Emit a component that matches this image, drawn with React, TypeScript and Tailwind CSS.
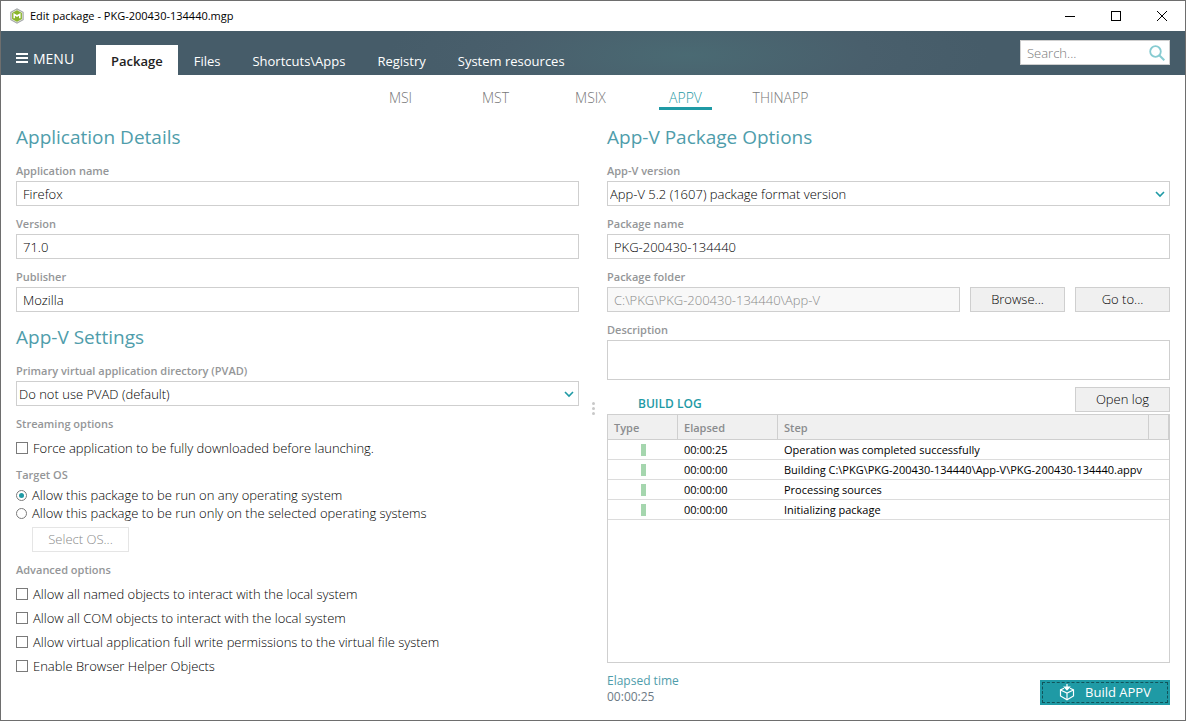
import { useState, type ReactNode } from 'react';

const mainTabs = ['Package', 'Files', 'Shortcuts\\Apps', 'Registry', 'System resources'];

const formats = ['MSI', 'MST', 'MSIX', 'APPV', 'THINAPP'];

const logRows = [
  { elapsed: '00:00:25', step: 'Operation was completed successfully' },
  { elapsed: '00:00:00', step: 'Building C:\\PKG\\PKG-200430-134440\\App-V\\PKG-200430-134440.appv' },
  { elapsed: '00:00:00', step: 'Processing sources' },
  { elapsed: '00:00:00', step: 'Initializing package' },
];

const advancedOptions = [
  'Allow all named objects to interact with the local system',
  'Allow all COM objects to interact with the local system',
  'Allow virtual application full write permissions to the virtual file system',
  'Enable Browser Helper Objects',
];

const inputClass =
  'block h-[25px] w-full min-w-0 border border-[#cfcfcf] bg-white px-1.5 text-[13px] font-light text-black outline-none disabled:bg-[#f8f8f8] disabled:text-[#8a8a8a]';
const buttonClass =
  'h-[25px] w-[95px] shrink-0 border border-[#cfcfcf] bg-[#f0f0f0] pt-px text-[13px] font-light text-black hover:bg-[#e6e6e6]';
const labelClass = 'block h-4 text-[11px] leading-4 font-semibold text-[#949698]';

function AppIcon() {
  return (
    <svg width="16" height="16" viewBox="0 0 16 16" aria-hidden="true">
      <path d="M8 .3 14.7 4v8L8 15.7 1.3 12V4z" fill="#a3a6a8" />
      <path d="M8 1.5 13.6 4.6v6.8L8 14.5l-5.6-3.1V4.6z" fill="#e6eadc" />
      <path d="M8 2.3 12.9 5v6L8 13.7 3.1 11V5z" fill="#8ab52b" />
      <path d="M5.2 10.300V6.300L8 8l2.800-1.700v4" fill="none" stroke="#fff" strokeWidth="1.500" />
    </svg>
  );
}

function BoxIcon() {
  return (
    <svg width="16" height="17" viewBox="0 0 16 17" fill="none" stroke="#fff" strokeWidth="1.2" aria-hidden="true">
      <path d="M5 4.300 1.500 6v6L8 15.700 14.500 12V6L11 4.300" />
      <path d="M1.500 6 8 9l6.500-3M8 9v6.500" />
      <path d="M8 0v5M5.500 3 8 5.800 10.500 3z" fill="#fff" />
    </svg>
  );
}

function Heading({ children }: { children: ReactNode }) {
  return <h2 className="h-7 text-[19px] leading-7 text-[#4f9dab]">{children}</h2>;
}

function Field({ id, label, children }: { id: string; label: string; children: ReactNode }) {
  return (
    <div className="flex flex-col gap-0.5">
      <label htmlFor={id} className={labelClass}>
        {label}
      </label>
      {children}
    </div>
  );
}

function Select({ id, value }: { id: string; value: string }) {
  return (
    <div className="relative">
      <select
        id={id}
        className="block h-[25px] w-full appearance-none border border-[#cfcfcf] bg-white pt-0.5 pr-6 pl-0.5 text-[13px] font-light text-black outline-none"
      >
        <option>{value}</option>
      </select>
      <svg
        className="pointer-events-none absolute top-[9px] right-[5px]"
        width="10"
        height="8"
        viewBox="0 0 10 8"
        fill="none"
        stroke="#1f9aa5"
        strokeWidth="1.6"
        aria-hidden="true"
      >
        <path d="m1 2 4 4 4-4" />
      </svg>
    </div>
  );
}

function Check({ label }: { label: string }) {
  return (
    <label className="flex h-6 items-center gap-[5px] text-[13px] font-light text-black">
      <input type="checkbox" className="h-3 w-3 shrink-0 appearance-none border border-[#7a7a7a] bg-white checked:bg-[#1f9aa5]" />
      <span className="pt-0.5">{label}</span>
    </label>
  );
}

function Radio({ label, checked, onChange }: { label: string; checked: boolean; onChange: () => void }) {
  return (
    <label className="flex h-[18px] items-center gap-[5px] text-[13px] font-light text-black">
      <input
        type="radio"
        name="target-os"
        checked={checked}
        onChange={onChange}
        className="h-[11px] w-[11px] shrink-0 appearance-none rounded-full border border-[#7a7a7a] bg-white bg-clip-content p-0.5 checked:bg-[#1f9aa5]"
      />
      <span className="pt-0.5">{label}</span>
    </label>
  );
}

function TitleBar() {
  return (
    <div className="flex h-[30px] shrink-0 items-center bg-white pl-2 text-[11px] text-black">
      <AppIcon />
      <span className="ml-[5px]">Edit package - PKG-200430-134440.mgp</span>
      <div className="ml-auto flex">
        <button type="button" aria-label="Minimize" className="flex h-[29px] w-[46px] items-center justify-center">
          <svg width="10" height="10" viewBox="0 0 10 10" stroke="#000" shapeRendering="crispEdges">
            <path d="M0 5.5h10" />
          </svg>
        </button>
        <button type="button" aria-label="Maximize" className="flex h-[29px] w-[46px] items-center justify-center">
          <svg width="10" height="10" viewBox="0 0 10 10" stroke="#000" fill="none" shapeRendering="crispEdges">
            <rect x=".5" y=".5" width="9" height="9" />
          </svg>
        </button>
        <button type="button" aria-label="Close" className="flex h-[29px] w-[46px] items-center justify-center">
          <svg width="10" height="10" viewBox="0 0 10 10" stroke="#000">
            <path d="m0 0 10 10M10 0 0 10" />
          </svg>
        </button>
      </div>
    </div>
  );
}

function Header() {
  const [tab, setTab] = useState('Package');

  return (
    <header className="flex h-11 shrink-0 bg-[#465c69] bg-[radial-gradient(ellipse_300px_70px_at_58%_55%,#4a6a73,#495f6c_60%,#465c69)] text-white">
      <button type="button" className="flex w-[95px] items-center gap-[5px] pt-2.5 pl-[15px] text-[14px]">
        <svg width="12" height="10" viewBox="0 0 12 10" fill="#fff" aria-hidden="true">
          <path d="M0 0h12v2H0zM0 4h12v2H0zM0 8h12v2H0z" />
        </svg>
        MENU
      </button>
      <nav className="flex items-end">
        {mainTabs.map((t) => (
          <button
            key={t}
            type="button"
            onClick={() => setTab(t)}
            className={`h-[30px] pt-1 text-[13px] ${
              t === tab ? 'bg-white px-[15px] font-semibold text-[#222]' : 'px-4 text-white'
            }`}
          >
            {t}
          </button>
        ))}
      </nav>
      <div className="mt-[9px] mr-[15px] ml-auto flex h-[25px] w-[150px] items-center border border-[#cfcfcf] bg-white">
        <input
          type="search"
          aria-label="Search"
          placeholder="Search..."
          className="w-full min-w-0 pt-0.5 pl-1.5 text-[13px] font-light text-black outline-none placeholder:text-[#777]"
        />
        <svg className="mr-1 shrink-0" width="16" height="16" viewBox="0 0 16 16" fill="none" stroke="#86cbd1" aria-hidden="true">
          <circle cx="6.5" cy="6.5" r="5.3" strokeWidth="1.8" />
          <path d="m10.3 10.3 5 5" strokeWidth="2" />
        </svg>
      </div>
    </header>
  );
}

function FormatTabs() {
  const [format, setFormat] = useState('APPV');

  return (
    <nav className="flex h-[35px] shrink-0 items-end pl-[352px]">
      {formats.map((f) => (
        <button key={f} type="button" onClick={() => setFormat(f)} className="flex w-[95px] justify-center text-[14px] font-light">
          <span
            className={`flex h-[25px] items-center border-b-[3px] px-2.5 pt-0.5 ${
              f === format ? 'border-[#1f9aa5] text-[#1f9aa5]' : 'border-transparent text-[#777]'
            }`}
          >
            {f}
          </span>
        </button>
      ))}
    </nav>
  );
}

function Details() {
  const [os, setOs] = useState<'any' | 'selected'>('any');

  return (
    <section className="flex min-w-0 flex-1 flex-col">
      <Heading>Application Details</Heading>
      <div className="mt-3 flex flex-col gap-2.5">
        <Field id="app-name" label="Application name">
          <input id="app-name" className={inputClass} defaultValue="Firefox" />
        </Field>
        <Field id="app-version" label="Version">
          <input id="app-version" className={inputClass} defaultValue="71.0" />
        </Field>
        <Field id="publisher" label="Publisher">
          <input id="publisher" className={inputClass} defaultValue="Mozilla" />
        </Field>
      </div>

      <div className="mt-[11px]">
        <Heading>App-V Settings</Heading>
      </div>
      <div className="mt-3">
        <Field id="pvad" label="Primary virtual application directory (PVAD)">
          <Select id="pvad" value="Do not use PVAD (default)" />
        </Field>
      </div>
      <fieldset className="mt-2.5">
        <legend className={labelClass}>Streaming options</legend>
        <div className="mt-1">
          <Check label="Force application to be fully downloaded before launching." />
        </div>
      </fieldset>
      <fieldset className="mt-[7px]">
        <legend className={labelClass}>Target OS</legend>
        <div className="mt-[3px]">
          <Radio
            label="Allow this package to be run on any operating system"
            checked={os === 'any'}
            onChange={() => setOs('any')}
          />
          <Radio
            label="Allow this package to be run only on the selected operating systems"
            checked={os === 'selected'}
            onChange={() => setOs('selected')}
          />
        </div>
        <button
          type="button"
          disabled={os === 'any'}
          className="mt-[5px] ml-4 h-[25px] w-[97px] border border-[#cfcfcf] bg-white pt-px text-[13px] font-light text-black disabled:border-[#e5e5e5] disabled:text-[#8a8a8a]"
        >
          Select OS...
        </button>
      </fieldset>
      <fieldset className="mt-2.5">
        <legend className={labelClass}>Advanced options</legend>
        <div className="mt-1">
          {advancedOptions.map((o) => (
            <Check key={o} label={o} />
          ))}
        </div>
      </fieldset>
    </section>
  );
}

function BuildLog() {
  const th = 'h-[25px] border-r border-b border-[#cfcfcf] px-1.5 pt-0.5 text-left font-semibold';
  const td = 'h-5 border-b border-[#dcdcdc] px-1.5';

  return (
    <div className="mt-0.5 flex-1 border border-[#cfcfcf]">
      <table className="w-full table-fixed border-separate border-spacing-0 text-[11px] leading-4 text-black">
        <colgroup>
          <col className="w-[70px]" />
          <col className="w-[100px]" />
          <col />
          <col className="w-5" />
        </colgroup>
        <thead className="bg-[#f0f0f0] text-[#8a8c8e]">
          <tr>
            <th className={th}>Type</th>
            <th className={th}>Elapsed</th>
            <th className={th}>Step</th>
            <th className={th} aria-label="More" />
          </tr>
        </thead>
        <tbody>
          {logRows.map((r) => (
            <tr key={r.step}>
              <td className={td}>
                <div className="mx-auto h-3 w-[5px] bg-[#a5d6ae]" />
              </td>
              <td className={td}>{r.elapsed}</td>
              <td className={td}>{r.step}</td>
              <td className={td} />
            </tr>
          ))}
        </tbody>
      </table>
    </div>
  );
}

function PackageOptions() {
  return (
    <section className="flex min-w-0 flex-1 flex-col">
      <Heading>App-V Package Options</Heading>
      <div className="mt-3 flex flex-col gap-2.5">
        <Field id="appv-version" label="App-V version">
          <Select id="appv-version" value="App-V 5.2 (1607) package format version" />
        </Field>
        <Field id="package-name" label="Package name">
          <input id="package-name" className={inputClass} defaultValue="PKG-200430-134440" />
        </Field>
        <Field id="package-folder" label="Package folder">
          <div className="flex gap-2.5">
            <input id="package-folder" disabled className={inputClass} defaultValue="C:\PKG\PKG-200430-134440\App-V" />
            <button type="button" className={buttonClass}>
              Browse...
            </button>
            <button type="button" className={buttonClass}>
              Go to...
            </button>
          </div>
        </Field>
        <Field id="description" label="Description">
          <textarea
            id="description"
            className="block h-10 w-full resize-none border border-[#cfcfcf] bg-white px-1.5 text-[13px] font-light outline-none"
          />
        </Field>
      </div>
      <div className="mt-[7px] flex items-end justify-between pl-[31px]">
        <h3 className="text-[12px] leading-4 font-semibold text-[#1f9aa5]">BUILD LOG</h3>
        <button type="button" className={buttonClass}>
          Open log
        </button>
      </div>
      <BuildLog />
      <div className="mt-2.5 flex items-end justify-between">
        <dl className="text-[12px] leading-4">
          <dt className="text-[#4f9dab]">Elapsed time</dt>
          <dd className="text-[#6d7a85]">00:00:25</dd>
        </dl>
        <button type="button" className="h-[25px] w-[130px] bg-[#1f9aa5] p-0.5 text-[13px] font-medium text-white">
          <span className="flex h-full items-center justify-center gap-2.5 border border-dashed border-[#11535a]">
            <BoxIcon />
            Build APPV
          </span>
        </button>
      </div>
    </section>
  );
}

export default function App() {
  return (
    <div className="flex min-h-screen flex-col border border-[#6e6e6e] bg-white font-['Open_Sans','Noto_Sans',sans-serif]">
      <TitleBar />
      <Header />
      <FormatTabs />
      <main className="flex flex-1 px-[15px] pt-[13px] pb-[15px]">
        <Details />
        <div className="flex w-7 flex-col items-center gap-0.5 pt-[279px]" aria-hidden="true">
          <span className="h-[3px] w-[3px] rounded-full bg-[#c8c8c8]" />
          <span className="h-[3px] w-[3px] rounded-full bg-[#c8c8c8]" />
          <span className="h-[3px] w-[3px] rounded-full bg-[#c8c8c8]" />
        </div>
        <PackageOptions />
      </main>
    </div>
  );
}
